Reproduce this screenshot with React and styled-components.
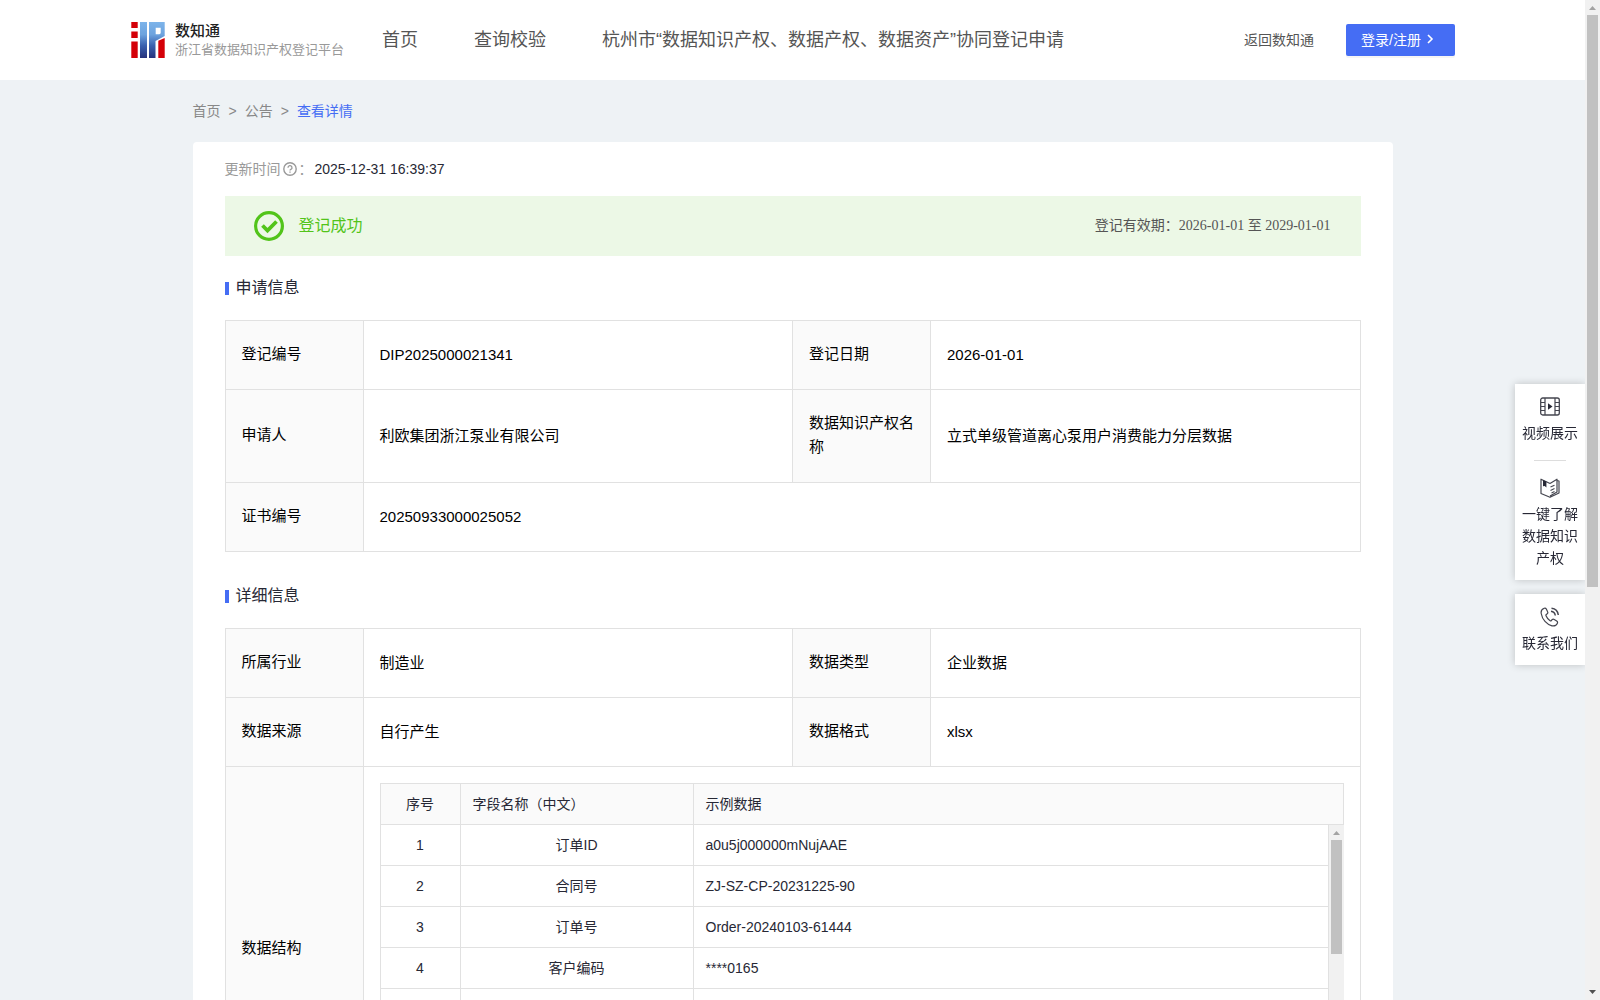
import React from 'react';
import styled, { createGlobalStyle } from 'styled-components';

const SANS = `'Liberation Sans', 'Noto Sans CJK SC', sans-serif`;
const SERIF = `'Liberation Serif', 'Noto Sans CJK SC', serif`;
const LINE = '#e1e1e1';
const BLUE = '#456df4';

const GlobalStyle = createGlobalStyle`
  * {
    box-sizing: border-box;
  }
  body {
    margin: 0;
    background: #eef2f5;
    font-family: ${SANS};
    font-size: 14px;
    line-height: 22px;
    color: #272835;
  }
  a {
    color: inherit;
    text-decoration: none;
  }
`;

const Page = styled.div`
  display: flex;
  height: 100vh;
  overflow: hidden;
`;

const Content = styled.div`
  flex: 1;
  min-width: 0;
`;

const Header = styled.header`
  display: flex;
  align-items: center;
  height: 80px;
  padding: 0 130px;
  background: #fff;
  color: #555;
`;

const Brand = styled.a`
  display: flex;
  align-items: center;
  gap: 9px;
  margin-right: 38px;
`;

const BrandName = styled.div`
  font-size: 15px;
  line-height: 20px;
  font-weight: 500;
  color: #222;
`;

const BrandSub = styled.div`
  font-size: 13px;
  line-height: 18px;
  color: #999;
`;

const Nav = styled.nav`
  display: flex;
  flex: 1;
  gap: 56px;
  font-size: 18px;
  line-height: 26px;
  white-space: nowrap;
`;

const BackLink = styled.a`
  margin-right: 32px;
`;

const LoginButton = styled.button`
  display: flex;
  align-items: center;
  gap: 4px;
  height: 32px;
  padding: 0 20px 2px 15px;
  border: 0;
  border-radius: 2px;
  background: ${BLUE};
  box-shadow: 0 2px 0 rgba(0, 0, 0, 0.04);
  color: #fff;
  font-family: inherit;
  font-size: 14px;
  cursor: pointer;
`;

const Main = styled.main`
  max-width: 1200px;
  margin: 0 auto;
  padding-bottom: 40px;
`;

const Breadcrumb = styled.nav`
  display: flex;
  align-items: center;
  gap: 8px;
  height: 62px;
  color: #888;
`;

const Current = styled.span`
  color: ${BLUE};
`;

const Card = styled.section`
  padding: 16px 32px 32px;
  border-radius: 4px;
  background: #fff;
`;

const UpdateTime = styled.div`
  display: flex;
  align-items: center;
  gap: 2px;
  margin-bottom: 16px;
  color: #999;
`;

const Time = styled.span`
  color: #272835;
`;

const Banner = styled.div`
  display: flex;
  align-items: center;
  gap: 15px;
  height: 60px;
  padding: 0 30px 0 29px;
  background: #ecf8e6;
`;

const Status = styled.span`
  flex: 1;
  font-size: 16px;
  color: #52c41a;
`;

const Validity = styled.span`
  font-family: ${SERIF};
  color: #555;
`;

const SectionTitle = styled.h2`
  display: flex;
  align-items: center;
  gap: 7px;
  margin: ${({ $first }) => ($first ? '20px' : '32px')} 0 20px;
  font-size: 16px;
  line-height: 24px;
  font-weight: 400;

  &::before {
    content: '';
    width: 4px;
    height: 13px;
    background: ${BLUE};
  }
`;

const InfoTable = styled.table`
  width: 100%;
  table-layout: fixed;
  border-collapse: collapse;
  font-size: 15px;
  line-height: 24px;
  color: #000;
`;

const Label = styled.th`
  padding: 21px 16px 23px;
  border: 1px solid ${LINE};
  background: #fafafa;
  font-weight: 400;
  text-align: left;
`;

const Value = styled.td`
  padding: ${({ $nested }) => ($nested ? '16px' : '22px 16px')};
  border: 1px solid ${LINE};
`;

const LabelCol = styled.col`
  width: 138px;
`;

const FieldTable = styled.table`
  width: 100%;
  table-layout: fixed;
  border-collapse: separate;
  border-spacing: 0;
  border-left: 1px solid ${LINE};
  font-size: 14px;
  line-height: 22px;
  color: #272835;
`;

const FieldHead = styled.th`
  padding: 9px 12px;
  border: solid ${LINE};
  border-width: 1px 1px 1px 0;
  background: #fafafa;
  font-weight: 400;
  text-align: ${({ $center }) => ($center ? 'center' : 'left')};
`;

const FieldCell = styled.td`
  height: 41px;
  padding: 9px 12px;
  border: solid ${LINE};
  border-width: 0 1px 1px 0;
  text-align: ${({ $center }) => ($center ? 'center' : 'left')};
`;

const FieldViewport = styled.div`
  display: flex;
  height: 290px;
  overflow: hidden;
`;

const IndexCol = styled.col`
  width: 80px;
`;

const NameCol = styled.col`
  width: 233px;
`;

const Track = styled.div`
  display: flex;
  flex: none;
  flex-direction: column;
  align-items: center;
  width: 15px;
  background: #f1f1f1;
`;

const Arrow = styled.svg`
  display: block;
  flex: none;
  width: 15px;
  height: 15px;
  fill: ${({ $active }) => ($active ? '#505050' : '#a3a3a3')};
`;

const Rail = styled.div`
  flex: 1;
  width: 11px;
`;

const Thumb = styled.div`
  background: #c1c1c1;
`;

const Dock = styled.aside`
  position: fixed;
  top: 384px;
  right: 15px;
  display: flex;
  flex-direction: column;
  gap: 14px;
  width: 70px;
  clip-path: inset(-12px 0 -12px -12px);
`;

const DockGroup = styled.div`
  padding: 0 6px;
  background: #fff;
  box-shadow: 0 0 8px rgba(0, 0, 0, 0.2);
`;

const DockLink = styled.a`
  display: flex;
  flex-direction: column;
  align-items: center;
  gap: 5px;
  padding: 13px 0 11px;
  text-align: center;
`;

const DockDivider = styled.div`
  width: 32px;
  height: 1px;
  margin: 5px auto 4px;
  background: #ddd;
`;

const Logo = () => (
  <svg width="36" height="36" viewBox="0 0 36 36" aria-hidden="true">
    <defs>
      <linearGradient id="logoBlue" x1="0" y1="0" x2="0" y2="36" gradientUnits="userSpaceOnUse">
        <stop offset="0" stopColor="#7db4ea" />
        <stop offset="0.35" stopColor="#6da3de" />
        <stop offset="0.65" stopColor="#3a62b0" />
        <stop offset="1" stopColor="#26327c" />
      </linearGradient>
    </defs>
    <path fill="#d40008" d="M1.300 0h6.400v6H1.300zM1.300 9.500h6.400V16H1.300zM1.300 19.500h6.400V36H1.300zM28.300 18.700l6.400-2.700v20h-6.400z" />
    <path
      fill="url(#logoBlue)"
      fillRule="evenodd"
      d="M10 0h7v36h-7zM19 0h15.700v14l-9.200 5V36H19zM25.700 5.700v6.600h3.500q1.500-.3 1.500-1.500V5.700z"
    />
  </svg>
);

const QuestionIcon = () => (
  <svg width="14" height="14" viewBox="0 0 14 14" fill="none" stroke="#999" aria-hidden="true">
    <circle cx="7" cy="7" r="6.2" strokeWidth="1.4" />
    <path d="M5 5.700a2 2 0 1 1 2.900 1.700c-.6.3-.9.6-.9 1.200M7 9.600v1.200" strokeWidth="1.3" />
  </svg>
);

const SuccessIcon = () => (
  <svg width="30" height="30" viewBox="0 0 30 30" fill="none" stroke="#52c41a" aria-hidden="true">
    <circle cx="15" cy="15" r="13.4" strokeWidth="3.2" />
    <path d="M8.500 14.500l5 5 9-9" strokeWidth="3.8" />
  </svg>
);

const ArrowIcon = () => (
  <svg width="10" height="10" viewBox="0 0 10 10" fill="none" stroke="#fff" aria-hidden="true">
    <path d="M3 1l4 4-4 4" strokeWidth="1.6" />
  </svg>
);

const VideoIcon = () => (
  <svg width="20" height="20" viewBox="0 0 20 20" fill="none" stroke="#44454f" aria-hidden="true">
    <rect x="0.7" y="1" width="18.6" height="17" rx="2" strokeWidth="1.3" />
    <path d="M5 1v17M15 1v17M1 5.500h4M1 9.500h4M1 13.500h4M15 5.500h4M15 9.500h4M15 13.500h4" strokeWidth="1.2" />
    <path d="M8 6.200l4.500 3.300L8 12.800z" fill="#272835" stroke="none" />
  </svg>
);

const BookIcon = () => (
  <svg width="20" height="20" viewBox="0 0 20 20" fill="none" stroke="#44454f" strokeLinejoin="round" aria-hidden="true">
    <path d="M10 5.500L1 1.200V15.500l9 3.800 9-4.300V3l-2-.5M10 5.500L17 1.200v12.800l-7 4" strokeWidth="1.2" />
    <path d="M10.500 9l4-1.800M10.500 12.400l4-1.800M11.500 15l3-1.400" strokeWidth="1.1" />
    <path d="M3 2l3.400 1.600v6L4.700 8 3 8.200z" fill="#272835" stroke="none" />
  </svg>
);

const PhoneIcon = () => (
  <svg width="20" height="20" viewBox="0 0 20 20" fill="none" stroke="#44454f" strokeLinejoin="round" aria-hidden="true">
    <path
      d="M4.200 1.200C2 2 .8 4 1.200 6.500c1 6 5.500 11 10.800 12.300 2.600.5 4.600-.6 5.400-2.600.4-1.100.1-1.700-.7-2.200l-2.500-1.600c-.8-.5-1.500-.4-2.100.3l-.7.8c-.4.4-.8.5-1.300.2-1.900-1.200-3.300-2.900-4.100-4.900-.2-.5-.1-.9.3-1.300l.9-.7c.6-.5.8-1.200.4-2L6.300 2c-.4-.8-1.100-1.100-2.100-.8z"
      strokeWidth="1.2"
    />
    <path d="M11 4.200c2.300.3 4 2 4.300 4.300M11.500 1.200c3.700.4 6.400 3.100 6.800 6.800" strokeWidth="1.5" />
  </svg>
);

// thumb: percentage of the rail that is in view
const Scrollbar = ({ thumb }) => (
  <Track aria-hidden="true">
    <Arrow viewBox="0 0 15 15">
      <path d="M4 10h7L7.500 6z" />
    </Arrow>
    <Rail>
      <Thumb style={{ height: `${thumb}%` }} />
    </Rail>
    <Arrow $active viewBox="0 0 15 15">
      <path d="M4 5h7L7.500 9z" />
    </Arrow>
  </Track>
);

const ROW_COUNT = 16;

const samples = [
  ['订单ID', 'a0u5j000000mNujAAE'],
  ['合同号', 'ZJ-SZ-CP-20231225-90'],
  ['订单号', 'Order-20240103-61444'],
  ['客户编码', '****0165'],
];

const InfoCols = () => (
  <colgroup>
    <LabelCol />
    <col />
    <LabelCol />
    <col />
  </colgroup>
);

const FieldCols = () => (
  <colgroup>
    <IndexCol />
    <NameCol />
    <col />
  </colgroup>
);

const InfoRow = ({ items }) => (
  <tr>
    {items.map(([label, value]) => (
      <React.Fragment key={label}>
        <Label scope="row">{label}</Label>
        <Value colSpan={items.length === 1 ? 3 : 1}>{value}</Value>
      </React.Fragment>
    ))}
  </tr>
);

const FieldList = () => (
  <>
    <FieldTable>
      <FieldCols />
      <thead>
        <tr>
          <FieldHead $center>序号</FieldHead>
          <FieldHead>字段名称（中文）</FieldHead>
          <FieldHead>示例数据</FieldHead>
        </tr>
      </thead>
    </FieldTable>
    <FieldViewport>
      <Content>
        <FieldTable>
          <FieldCols />
          <tbody>
            {Array.from({ length: ROW_COUNT }, (_, i) => {
              const [name, sample] = samples[i] || [];
              return (
                <tr key={i}>
                  <FieldCell $center>{name && i + 1}</FieldCell>
                  <FieldCell $center>{name}</FieldCell>
                  <FieldCell>{sample}</FieldCell>
                </tr>
              );
            })}
          </tbody>
        </FieldTable>
      </Content>
      <Scrollbar thumb={44} />
    </FieldViewport>
  </>
);

const App = () => (
  <>
    <GlobalStyle />
    <Page>
      <Content>
        <Header>
          <Brand href="#">
            <Logo />
            <div>
              <BrandName>数知通</BrandName>
              <BrandSub>浙江省数据知识产权登记平台</BrandSub>
            </div>
          </Brand>
          <Nav>
            <a href="#">首页</a>
            <a href="#">查询校验</a>
            <a href="#">杭州市“数据知识产权、数据产权、数据资产”协同登记申请</a>
          </Nav>
          <BackLink href="#">返回数知通</BackLink>
          <LoginButton type="button">
            登录/注册
            <ArrowIcon />
          </LoginButton>
        </Header>

        <Main>
          <Breadcrumb>
            <a href="#">首页</a>
            <span>&gt;</span>
            <a href="#">公告</a>
            <span>&gt;</span>
            <Current>查看详情</Current>
          </Breadcrumb>

          <Card>
            <UpdateTime>
              更新时间
              <QuestionIcon />
              ：
              <Time>2025-12-31 16:39:37</Time>
            </UpdateTime>

            <Banner>
              <SuccessIcon />
              <Status>登记成功</Status>
              <Validity>登记有效期：2026-01-01 至 2029-01-01</Validity>
            </Banner>

            <SectionTitle $first>申请信息</SectionTitle>
            <InfoTable>
              <InfoCols />
              <tbody>
                <InfoRow items={[['登记编号', 'DIP2025000021341'], ['登记日期', '2026-01-01']]} />
                <InfoRow
                  items={[
                    ['申请人', '利欧集团浙江泵业有限公司'],
                    ['数据知识产权名称', '立式单级管道离心泵用户消费能力分层数据'],
                  ]}
                />
                <InfoRow items={[['证书编号', '20250933000025052']]} />
              </tbody>
            </InfoTable>

            <SectionTitle>详细信息</SectionTitle>
            <InfoTable>
              <InfoCols />
              <tbody>
                <InfoRow items={[['所属行业', '制造业'], ['数据类型', '企业数据']]} />
                <InfoRow items={[['数据来源', '自行产生'], ['数据格式', 'xlsx']]} />
                <tr>
                  <Label scope="row">数据结构</Label>
                  <Value colSpan={3} $nested>
                    <FieldList />
                  </Value>
                </tr>
              </tbody>
            </InfoTable>
          </Card>
        </Main>
      </Content>
      <Scrollbar thumb={59} />
    </Page>

    <Dock>
      <DockGroup>
        <DockLink href="#">
          <VideoIcon />
          视频展示
        </DockLink>
        <DockDivider />
        <DockLink href="#">
          <BookIcon />
          一键了解数据知识产权
        </DockLink>
      </DockGroup>
      <DockGroup>
        <DockLink href="#">
          <PhoneIcon />
          联系我们
        </DockLink>
      </DockGroup>
    </Dock>
  </>
);

export default App;
